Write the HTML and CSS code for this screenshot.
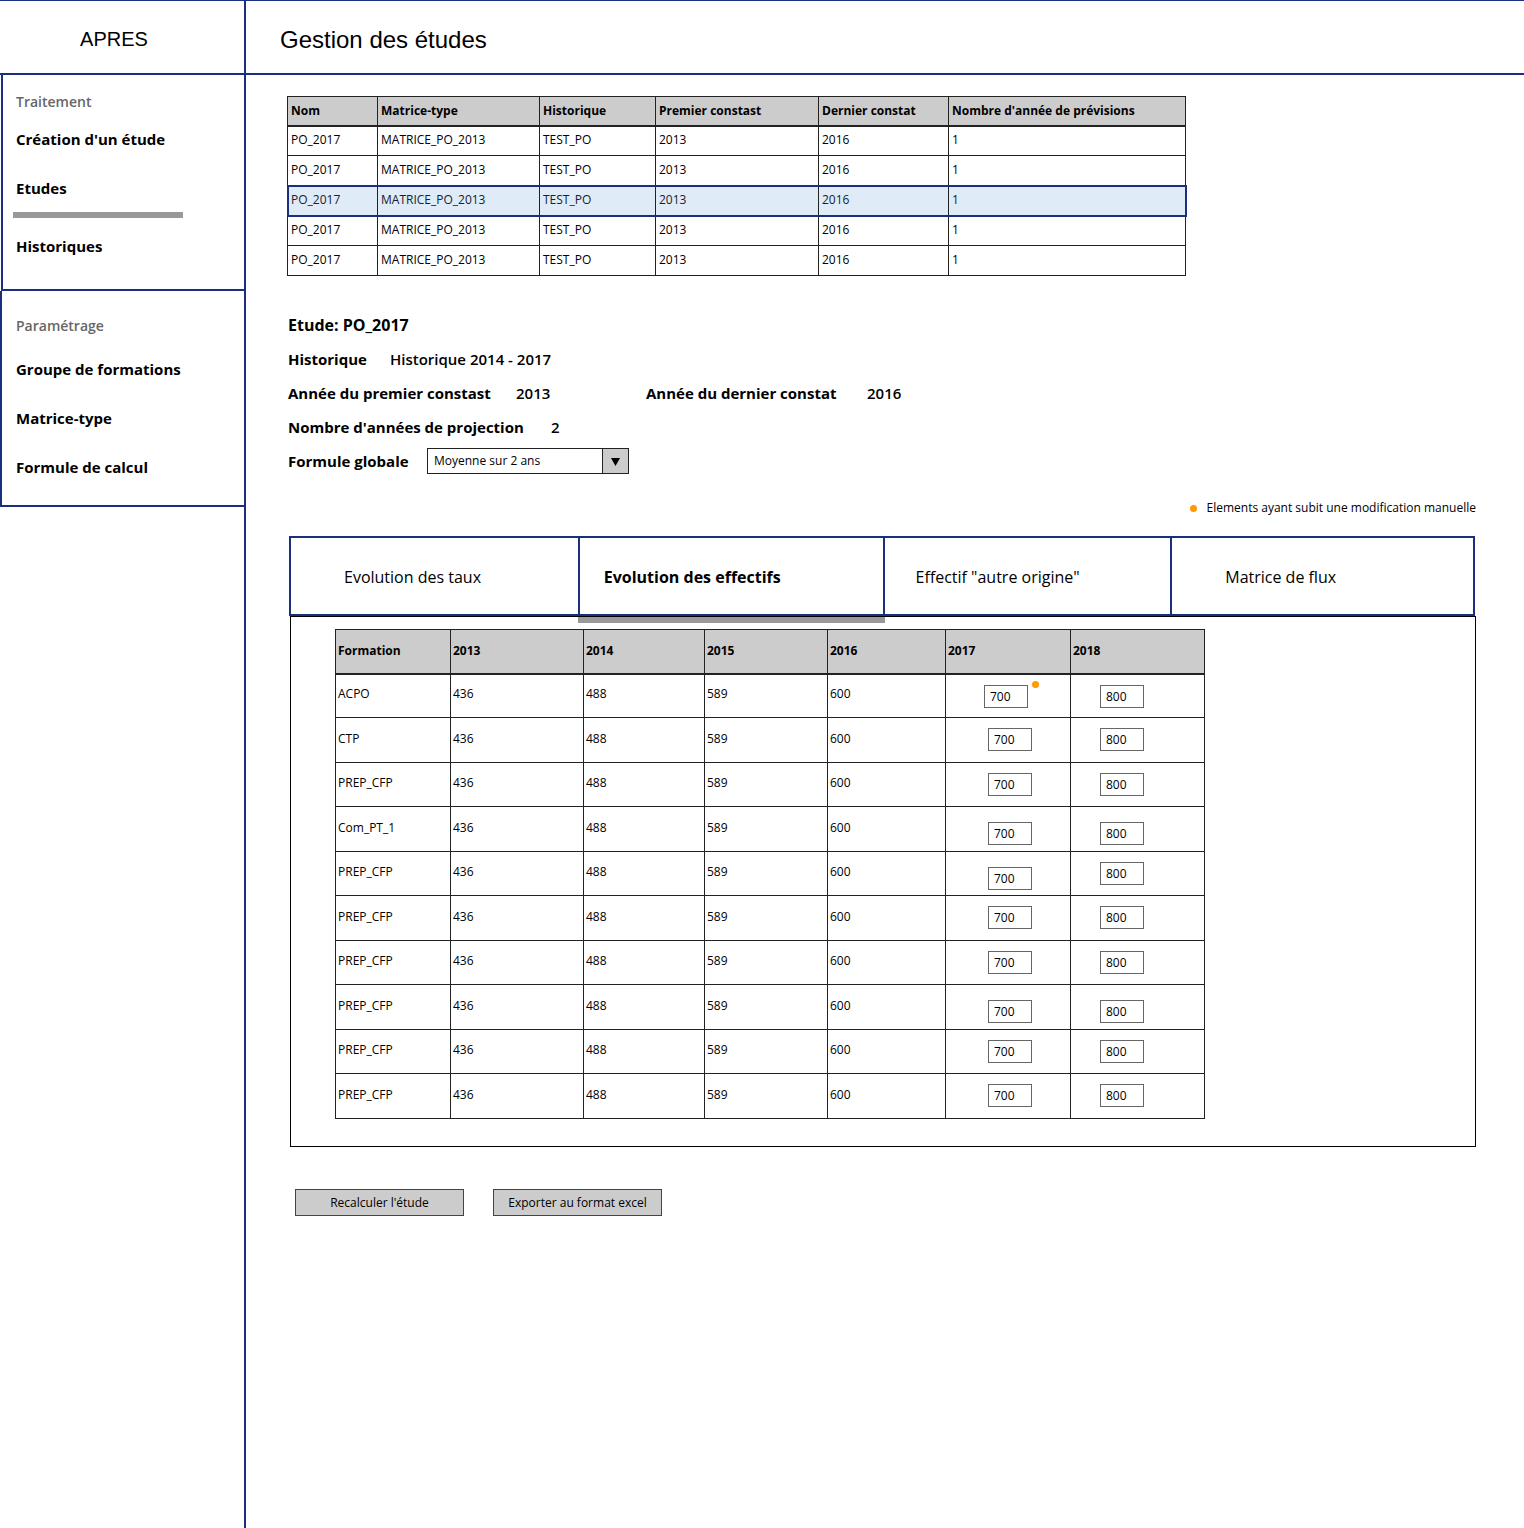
FILE: index.html
```html
<!DOCTYPE html>
<html lang="fr">
<head>
<meta charset="utf-8">
<meta name="viewport" content="width=device-width, initial-scale=1">
<title>APRES - Gestion des études</title>
<link rel="stylesheet" href="styles.css">
</head>
<body>
<div class="app">
  <div class="brand">APRES</div>
  <header class="page-header"><h1>Gestion des études</h1></header>

  <nav class="sidebar">
    <section class="menu menu-inset">
      <h2>Traitement</h2>
      <ul>
        <li><a href="#creation">Création d'un étude</a></li>
        <li class="active"><a href="#etudes" aria-current="page">Etudes</a></li>
        <li><a href="#historiques">Historiques</a></li>
      </ul>
    </section>
    <section class="menu">
      <h2>Paramétrage</h2>
      <ul>
        <li><a href="#groupes">Groupe de formations</a></li>
        <li><a href="#matrice">Matrice-type</a></li>
        <li><a href="#formule">Formule de calcul</a></li>
      </ul>
    </section>
  </nav>

  <main class="content">
    <table class="studies">
      <colgroup><col class="s-nom"><col class="s-matrice"><col class="s-histo"><col class="s-premier"><col class="s-dernier"><col></colgroup>
      <thead>
        <tr><th>Nom</th><th>Matrice-type</th><th>Historique</th><th>Premier constast</th><th>Dernier constat</th><th>Nombre d'année de prévisions</th></tr>
      </thead>
      <tbody>
        <tr><td>PO_2017</td><td>MATRICE_PO_2013</td><td>TEST_PO</td><td>2013</td><td>2016</td><td>1</td></tr>
        <tr><td>PO_2017</td><td>MATRICE_PO_2013</td><td>TEST_PO</td><td>2013</td><td>2016</td><td>1</td></tr>
        <tr class="selected"><td>PO_2017</td><td>MATRICE_PO_2013</td><td>TEST_PO</td><td>2013</td><td>2016</td><td>1</td></tr>
        <tr><td>PO_2017</td><td>MATRICE_PO_2013</td><td>TEST_PO</td><td>2013</td><td>2016</td><td>1</td></tr>
        <tr><td>PO_2017</td><td>MATRICE_PO_2013</td><td>TEST_PO</td><td>2013</td><td>2016</td><td>1</td></tr>
      </tbody>
    </table>

    <section class="details">
      <h2>Etude: PO_2017</h2>
      <div class="line"><span class="name w-histo">Historique</span><span class="value">Historique 2014 - 2017</span></div>
      <div class="line">
        <div class="pair first"><span class="name w-premier">Année du premier constast</span><span class="value">2013</span></div>
        <div class="pair"><span class="name w-dernier">Année du dernier constat</span><span class="value">2016</span></div>
      </div>
      <div class="line"><span class="name w-nombre">Nombre d'années de projection</span><span class="value">2</span></div>
      <div class="line">
        <label class="name w-formule" for="formule">Formule globale</label>
        <div class="select">
          <select id="formule"><option>Moyenne sur 2 ans</option></select>
          <svg class="arrow" viewBox="0 0 10 8" aria-hidden="true"><path d="M0 0H9L4.500 8Z"/></svg>
        </div>
      </div>
    </section>

    <p class="legend"><span class="dot"></span>Elements ayant subit une modification manuelle</p>

    <div class="tabs" role="tablist">
      <button class="tab wide" role="tab" type="button">Evolution des taux</button>
      <button class="tab current" role="tab" type="button" aria-selected="true">Evolution des effectifs</button>
      <button class="tab" role="tab" type="button">Effectif "autre origine"</button>
      <button class="tab wide" role="tab" type="button">Matrice de flux</button>
    </div>

    <div class="panel" role="tabpanel">
      <table class="numbers">
        <colgroup><col class="n-formation"><col class="n-2013"><col class="n-2014"><col class="n-2015"><col class="n-2016"><col class="n-2017"><col></colgroup>
        <thead>
          <tr><th>Formation</th><th>2013</th><th>2014</th><th>2015</th><th>2016</th><th>2017</th><th>2018</th></tr>
        </thead>
        <tbody>
          <tr><td>ACPO</td><td>436</td><td>488</td><td>589</td><td>600</td><td class="entry edited"><span class="field"><input type="text" value="700" aria-label="ACPO 2017"><span class="dot"></span></span></td><td class="entry last"><input type="text" value="800" aria-label="ACPO 2018"></td></tr>
          <tr><td>CTP</td><td>436</td><td>488</td><td>589</td><td>600</td><td class="entry"><input type="text" value="700" aria-label="CTP 2017"></td><td class="entry last"><input type="text" value="800" aria-label="CTP 2018"></td></tr>
          <tr><td>PREP_CFP</td><td>436</td><td>488</td><td>589</td><td>600</td><td class="entry"><input type="text" value="700" aria-label="PREP_CFP 2017"></td><td class="entry last"><input type="text" value="800" aria-label="PREP_CFP 2018"></td></tr>
          <tr><td>Com_PT_1</td><td>436</td><td>488</td><td>589</td><td>600</td><td class="entry low"><input type="text" value="700" aria-label="Com_PT_1 2017"></td><td class="entry last low"><input type="text" value="800" aria-label="Com_PT_1 2018"></td></tr>
          <tr><td>PREP_CFP</td><td>436</td><td>488</td><td>589</td><td>600</td><td class="entry low"><input type="text" value="700" aria-label="PREP_CFP 2017"></td><td class="entry last"><input type="text" value="800" aria-label="PREP_CFP 2018"></td></tr>
          <tr><td>PREP_CFP</td><td>436</td><td>488</td><td>589</td><td>600</td><td class="entry"><input type="text" value="700" aria-label="PREP_CFP 2017"></td><td class="entry last"><input type="text" value="800" aria-label="PREP_CFP 2018"></td></tr>
          <tr><td>PREP_CFP</td><td>436</td><td>488</td><td>589</td><td>600</td><td class="entry"><input type="text" value="700" aria-label="PREP_CFP 2017"></td><td class="entry last"><input type="text" value="800" aria-label="PREP_CFP 2018"></td></tr>
          <tr><td>PREP_CFP</td><td>436</td><td>488</td><td>589</td><td>600</td><td class="entry low"><input type="text" value="700" aria-label="PREP_CFP 2017"></td><td class="entry last low"><input type="text" value="800" aria-label="PREP_CFP 2018"></td></tr>
          <tr><td>PREP_CFP</td><td>436</td><td>488</td><td>589</td><td>600</td><td class="entry"><input type="text" value="700" aria-label="PREP_CFP 2017"></td><td class="entry last"><input type="text" value="800" aria-label="PREP_CFP 2018"></td></tr>
          <tr><td>PREP_CFP</td><td>436</td><td>488</td><td>589</td><td>600</td><td class="entry"><input type="text" value="700" aria-label="PREP_CFP 2017"></td><td class="entry last"><input type="text" value="800" aria-label="PREP_CFP 2018"></td></tr>
        </tbody>
      </table>
    </div>

    <div class="actions">
      <button class="action" type="button">Recalculer l'étude</button>
      <button class="action" type="button">Exporter au format excel</button>
    </div>
  </main>
</div>
</body>
</html>
```
FILE: styles.css
```css
:root {
  --blue: #1b2f80;
  --grey: #ccc;
  --bar: #999;
  --orange: #f90;
  --hand: "Comic Sans MS", "Open Sans", sans-serif;
}

* { box-sizing: border-box; }

body {
  margin: 0;
  background: #fff;
  color: #000;
  font: 12px/24px var(--hand);
}

h1, h2, p, ul { margin: 0; padding: 0; }
ul { list-style: none; }

.app {
  display: grid;
  grid-template-columns: 246px 1fr;
  grid-template-rows: auto 1fr;
  min-height: 100vh;
}

/* Top band */
.brand, .page-header {
  display: flex;
  align-items: center;
  height: 75px;
  border-top: 1px solid var(--blue);
  border-bottom: 2px solid var(--blue);
  font-family: "Liberation Sans", Arial, sans-serif;
}
.brand {
  justify-content: center;
  padding: 3px 16px 0 0;
  border-right: 2px solid var(--blue);
  font-size: 20px;
}
.page-header { padding: 6px 0 0 34px; }
.page-header h1 { font-size: 24px; font-weight: 400; }

/* Side menu */
.sidebar { border-right: 2px solid var(--blue); }
.menu {
  padding: 23px 14px 26px;
  border-left: 2px solid var(--blue);
  border-bottom: 2px solid var(--blue);
}
.menu h2 {
  margin-bottom: 19px;
  color: #666;
  font-size: 14px;
  font-weight: 600;
  line-height: 24px;
}
.menu li + li { margin-top: 25px; }
.menu a {
  display: block;
  color: #000;
  font-size: 15px;
  font-weight: 700;
  text-decoration: none;
}
.menu-inset { margin-left: 1px; padding: 15px 13px 31px; }
.menu-inset h2 { margin-bottom: 13px; }
.menu .active { position: relative; margin-bottom: 34px; }
.menu .active::after {
  content: "";
  position: absolute;
  left: -3px;
  bottom: -18px;
  width: 170px;
  height: 6px;
  background: var(--bar);
}
.menu .active + li { margin-top: 0; }

/* Main column */
.content { padding: 21px 48px 40px 41px; }

table {
  width: 100%;
  border-collapse: collapse;
  table-layout: fixed;
}
th, td {
  border: 1px solid #222;
  text-align: left;
  line-height: 20px;
}
th { background: var(--grey); font-weight: 700; }

.studies { max-width: 899px; }
.studies tr { height: 30px; }
.studies thead tr { height: 29px; }
.studies th, .studies td { padding: 0 3px; }
.studies td { padding-bottom: 2px; }
.studies th { border-bottom-width: 2px; }
.s-nom { width: 90px; }
.s-matrice { width: 162px; }
.s-histo { width: 116px; }
.s-premier { width: 163px; }
.s-dernier { width: 130px; }
.selected {
  background: #dfebf7;
  color: #14212f;
  outline: 2px solid var(--blue);
  outline-offset: -1px;
}

/* Study details */
.details {
  display: flex;
  flex-direction: column;
  gap: 10px;
  padding: 37px 1px 0;
}
.details h2, .name {
  font-size: 15px;
  font-weight: 700;
  line-height: 24px;
}
.details h2 { font-size: 16px; }
.line, .pair { display: flex; align-items: center; }
.line { height: 24px; }
.pair.first { width: 358px; }
.value { font-size: 15px; font-weight: 600; }
.w-histo { width: 102px; }
.w-premier { width: 228px; }
.w-dernier { width: 221px; }
.w-nombre { width: 263px; }
.w-formule { width: 139px; }

.select {
  position: relative;
  width: 202px;
  height: 26px;
}
.select select {
  display: block;
  width: 100%;
  height: 100%;
  padding: 0 6px;
  appearance: none;
  border: 1px solid #222;
  border-radius: 0;
  background: linear-gradient(#222, #222) right 25px top / 1px 100% no-repeat,
    linear-gradient(var(--grey), var(--grey)) right / 25px 100% no-repeat, #fff;
  color: #000;
  font: 12px/24px var(--hand);
}
.arrow {
  position: absolute;
  top: 10px;
  right: 8px;
  width: 10px;
  height: 8px;
  pointer-events: none;
}

.dot {
  display: inline-block;
  width: 7px;
  height: 7px;
  border-radius: 50%;
  background: var(--orange);
}
.legend {
  display: flex;
  align-items: center;
  justify-content: flex-end;
  gap: 10px;
  padding: 23px 0 16px;
}

/* Tabs */
.tabs {
  display: grid;
  grid-template-columns: 287fr 306fr 287fr 303fr;
  margin: 0 1px 0 2px;
  border: 2px solid var(--blue);
}
.tab {
  position: relative;
  height: 76px;
  padding: 2px 30px 0;
  border: 0;
  background: none;
  color: #000;
  font: 16px/24px var(--hand);
  text-align: left;
}
.tab + .tab { border-left: 2px solid var(--blue); }
.tab.wide { padding: 2px 53px 0; }
.tab.current { padding: 2px 24px 0; font-weight: 700; }
.tab.current::after {
  content: "";
  position: absolute;
  left: -2px;
  right: -2px;
  bottom: -9px;
  height: 6px;
  background: var(--bar);
}

.panel {
  margin-left: 3px;
  padding: 12px 44px 27px;
  border: 1px solid #000;
}
.numbers { max-width: 870px; }
.numbers tr { height: 45px; }
.numbers thead tr, .numbers tbody tr:nth-child(odd) { height: 44px; }
.numbers th, .numbers td { padding: 0 2px; }
.numbers td { padding-bottom: 3px; }
.numbers th { border-bottom-width: 2px; }
.n-formation { width: 115px; }
.n-2013 { width: 133px; }
.n-2014 { width: 121px; }
.n-2015 { width: 123px; }
.n-2016 { width: 118px; }
.n-2017 { width: 125px; }
.numbers .entry { padding: 10px 0 0 42px; vertical-align: top; }
.numbers .last { padding-left: 29px; }
.numbers .low { padding-top: 15px; }
.numbers .edited { padding-left: 38px; }
.field { position: relative; display: block; width: 44px; }
.field .dot { position: absolute; top: -4px; right: -11px; }
.entry input {
  display: block;
  width: 44px;
  height: 23px;
  padding: 0 5px;
  border: 1px solid #666;
  border-radius: 0;
  background: #fff;
  color: #000;
  font: 12px/20px var(--hand);
}

.actions {
  display: flex;
  flex-wrap: wrap;
  gap: 29px;
  padding: 42px 8px 0;
}
.action {
  width: 169px;
  height: 27px;
  padding: 0;
  border: 1px solid #444;
  background: var(--grey);
  color: #000;
  font: 12px/24px var(--hand);
}
```
